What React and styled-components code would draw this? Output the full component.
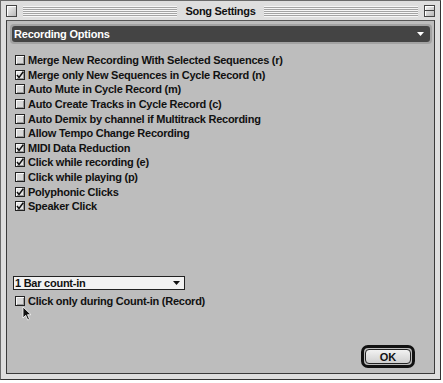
import styled, { createGlobalStyle } from "styled-components";

const GlobalStyle = createGlobalStyle`
  html, body {
    margin: 0;
    padding: 0;
    background: #ffffff;
  }
  body {
    font-family: "Liberation Sans", Arial, sans-serif;
  }
`;

const Window = styled.div`
  width: 441px;
  height: 380px;
  box-sizing: border-box;
  background: #dedede;
  border: 1px solid #6a6a6a;
  border-right-color: #333;
  border-bottom-color: #333;
  display: flex;
  flex-direction: column;
  padding: 0 5px 5px 5px;
`;

const TitleBar = styled.div`
  height: 18px;
  display: flex;
  align-items: center;
  gap: 4px;
  padding-top: 1px;
`;

const TitleBox = styled.div`
  width: 9px;
  height: 10px;
  flex: none;
  border: 1px solid #444;
  background: linear-gradient(135deg, #f4f4f4, #b8b8b8);
  box-shadow: inset 1px 1px 0 #fff;
  position: relative;

  ${({ $zoom }) =>
    $zoom &&
    `
    &::after {
      content: "";
      position: absolute;
      left: 0;
      right: 0;
      top: 4px;
      border-top: 1px solid #444;
    }
  `}
`;

const Stripes = styled.div`
  flex: 1;
  height: 11px;
  margin: 0 2px;
  background: repeating-linear-gradient(
    to bottom,
    #f6f6f6 0px,
    #f6f6f6 1px,
    #a4a4a4 1px,
    #a4a4a4 2px
  );
`;

const Title = styled.div`
  font-size: 11px;
  font-weight: 700;
  color: #111;
  letter-spacing: -0.3px;
  padding: 0 2px;
`;

const Content = styled.div`
  flex: 1;
  position: relative;
  background: #bdbdbd;
  border: 1px solid #3a3a3a;
  border-top-color: #555;
  display: flex;
  flex-direction: column;
  padding: 3px 2px 5px 3px;
`;

const HeaderFrame = styled.div`
  background: #a2a2a2;
  border-radius: 4px;
  padding: 2px;
`;

const HeaderPopup = styled.div`
  height: 16px;
  background: #444;
  border-radius: 3px;
  display: flex;
  align-items: center;
  justify-content: space-between;
  padding: 0 6px 0 2px;
  color: #fff;
  font-size: 11px;
  font-weight: 700;
  letter-spacing: -0.2px;
`;

const List = styled.div`
  display: flex;
  flex-direction: column;
  margin-top: ${({ $top }) => $top ?? 9}px;
  padding-left: 5px;
`;

const Row = styled.label`
  height: 14.6px;
  display: flex;
  align-items: center;
  gap: 3px;
  font-size: 11px;
  font-weight: 700;
  letter-spacing: -0.25px;
  color: #111;
  white-space: nowrap;
`;

const Box = styled.span`
  width: 8px;
  height: 8px;
  flex: none;
  border: 1px solid #222;
  background: ${({ $checked }) => ($checked ? "#e6e6e6" : "#d8d8d8")};
  box-shadow: inset 1px 1px 0 #f8f8f8, inset -1px -1px 0 #9a9a9a;
  display: flex;
  align-items: center;
  justify-content: center;
`;

const Spacer = styled.div`
  flex: 1;
`;

const CountIn = styled.div`
  display: flex;
  flex-direction: column;
  margin-bottom: 37px;
`;

const Select = styled.div`
  width: 165px;
  height: 12px;
  margin-left: 3px;
  background: #f2f2f2;
  border: 1px solid #222;
  display: flex;
  align-items: center;
  justify-content: space-between;
  padding: 0 4px 0 1px;
  font-size: 11px;
  font-weight: 700;
  letter-spacing: -0.25px;
  color: #111;
  margin-bottom: 3px;
`;

const Footer = styled.div`
  display: flex;
  justify-content: flex-end;
  padding-right: 17px;
`;

const DefaultRing = styled.div`
  border: 3px solid #111;
  border-radius: 7px;
  padding: 1px;
  background: #bdbdbd;
`;

const Button = styled.button`
  width: 46px;
  height: 15px;
  border: 1px solid #222;
  border-radius: 4px;
  background: linear-gradient(#f2f2f2, #cfcfcf);
  font-family: "Liberation Sans", Arial, sans-serif;
  font-size: 11px;
  font-weight: 700;
  color: #111;
  padding: 0;
  display: flex;
  align-items: center;
  justify-content: center;
`;

const Cursor = styled.svg`
  position: absolute;
  left: 15px;
  top: 285px;
`;

const Triangle = ({ color }) => (
  <svg width="7" height="4" viewBox="0 0 7 4">
    <path d="M0 0 H7 L3.5 4 Z" fill={color} />
  </svg>
);

const Check = () => (
  <svg width="8" height="8" viewBox="0 0 8 8">
    <path
      d="M1 4 L3 6.5 L7.5 0.5"
      fill="none"
      stroke="#111"
      strokeWidth="1.5"
    />
  </svg>
);

const Checkbox = ({ checked, children }) => (
  <Row>
    <Box $checked={checked}>{checked && <Check />}</Box>
    {children}
  </Row>
);

const options = [
  { label: "Merge New Recording With Selected Sequences (r)", checked: false },
  { label: "Merge only New Sequences in Cycle Record (n)", checked: true },
  { label: "Auto Mute in Cycle Record (m)", checked: false },
  { label: "Auto Create Tracks in Cycle Record (c)", checked: false },
  { label: "Auto Demix by channel if Multitrack Recording", checked: false },
  { label: "Allow Tempo Change Recording", checked: false },
  { label: "MIDI Data Reduction", checked: true },
  { label: "Click while recording (e)", checked: true },
  { label: "Click while playing (p)", checked: false },
  { label: "Polyphonic Clicks", checked: true },
  { label: "Speaker Click", checked: true },
];

export default function App() {
  return (
    <>
      <GlobalStyle />
      <Window>
        <TitleBar>
          <TitleBox />
          <Stripes />
          <Title>Song Settings</Title>
          <Stripes />
          <TitleBox $zoom />
        </TitleBar>
        <Content>
          <HeaderFrame>
            <HeaderPopup>
              Recording Options
              <Triangle color="#fff" />
            </HeaderPopup>
          </HeaderFrame>
          <List>
            {options.map((o) => (
              <Checkbox key={o.label} checked={o.checked}>
                {o.label}
              </Checkbox>
            ))}
          </List>
          <Spacer />
          <CountIn>
            <Select>
              1 Bar count-in
              <Triangle color="#111" />
            </Select>
            <List $top={0}>
              <Checkbox checked={false}>Click only during Count-in (Record)</Checkbox>
            </List>
          </CountIn>
          <Footer>
            <DefaultRing>
              <Button>OK</Button>
            </DefaultRing>
          </Footer>
          <Cursor width="11" height="15" viewBox="0 0 11 15">
            <path
              d="M1 1 L1 12 L3.7 9.3 L5.8 14 L7.5 13.2 L5.5 8.7 L9 8.7 Z"
              fill="#111"
              stroke="#fff"
              strokeWidth="0.8"
            />
          </Cursor>
        </Content>
      </Window>
    </>
  );
}
